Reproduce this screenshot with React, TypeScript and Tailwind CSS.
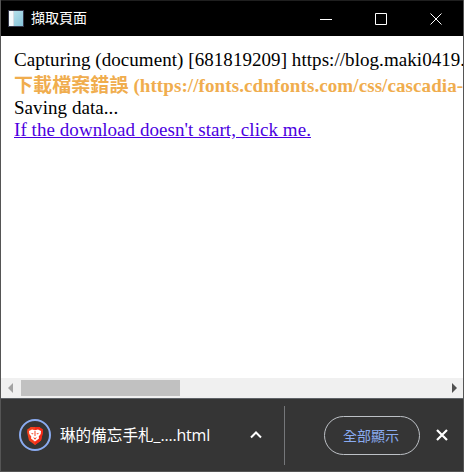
const serif = "font-['Liberation_Serif','Noto_Sans_CJK_TC',serif]";
const sans = "font-['Noto_Sans_CJK_TC',sans-serif]";

function TitleBar() {
  return (
    <header className={`flex h-9 shrink-0 items-center border-t border-[#1f1f1f] bg-black pl-[6px] text-white ${sans}`}>
      <svg width="18" height="18" viewBox="0 0 18 18" className="shrink-0">
        <defs>
          <linearGradient id="book" x1="0" y1="0" x2="1" y2="1">
            <stop offset="0" stopColor="#bfe6ee" />
            <stop offset="1" stopColor="#85c3d9" />
          </linearGradient>
        </defs>
        <rect x="1" y="0" width="16" height="17" fill="#34374a" />
        <rect x="2" y="1" width="14" height="15" fill="url(#book)" />
        <rect x="2" y="1" width="4" height="15" fill="#f4fafc" />
        <rect x="6" y="1" width="1" height="15" fill="#d8dde5" />
      </svg>
      <h1 className="mb-[3px] ml-[6px] text-[14px] leading-5">擷取頁面</h1>
      <svg width="123" height="14" viewBox="0 0 123 14" className="mr-[20px] ml-auto" fill="none" stroke="white">
        <path d="M0 7.5h12M55.5 1.5h11v11h-11zM110.5 1.5l11 11M121.5 1.5l-11 11" />
      </svg>
    </header>
  );
}

function Log() {
  return (
    <main className={`h-[342px] shrink-0 overflow-hidden bg-white pt-[13px] pl-[13px] text-[19px] leading-[22px] tracking-[0.057px] whitespace-nowrap text-black ${serif}`}>
      <div>Capturing (document) [681819209] https://blog.maki0419.</div>
      <div className="h-[26px] font-bold leading-[30px] tracking-[0.09px] text-[#f0ad4e]">下載檔案錯誤 (https://fonts.cdnfonts.com/css/cascadia-</div>
      <div>Saving data...</div>
      <a href="#" className="block w-fit text-[#4b00df] underline">If the download doesn't start, click me.</a>
    </main>
  );
}

function ScrollBar() {
  return (
    <div className="flex h-5 shrink-0 items-center bg-[#f0f0f0]">
      <svg width="20" height="20" viewBox="0 0 20 20"><path d="M12 5v10L7 10z" fill="#a3a3a3" /></svg>
      <div className="h-4 w-[159px] bg-[#c1c1c1]" />
      <svg width="20" height="20" viewBox="0 0 20 20" className="ml-auto"><path d="M9 5v10l5-5z" fill="#505050" /></svg>
    </div>
  );
}

function Downloads() {
  return (
    <footer className={`flex h-[74px] shrink-0 items-center border-y border-t-[#5f6368] border-b-[#555] bg-[#353535] pl-[18px] ${sans}`}>
      <svg width="32" height="34" viewBox="0 0 32 34" className="shrink-0">
        <circle cx="16" cy="17" r="15" fill="none" stroke="#8aabf0" strokeWidth="2" />
        <path d="M11.5 9h9l1.5 1.5 1.5.5.5 3-2 8.5L16 27l-6-4.5L8 14l.5-3 1.5-.5z" fill="#f5411f" />
        <path d="M16 9h4.5l1.5 1.5 1.5.5.5 3-2 8.5L16 27z" fill="#f42a18" />
        <path d="m10 13 3-1.5 3 .7 3-.7 3 1.5-.3 3-2 2.5.3 2L16 23.5l-4-3 .3-2-2-2.5z" fill="#fff" />
        <path d="m11.5 14.8 3 .7-.6 1zM20.5 14.8l-3 .7.6 1zM14 19.3l2 .8 2-.8-2 2.5zM15.5 13h1v5h-1z" fill="#f5411f" />
      </svg>
      <span className="mb-[2px] ml-[9px] w-[150px] shrink-0 text-[15.6px] leading-6 whitespace-nowrap text-white">
        琳的備忘手札<span className="font-['Open_Sans',sans-serif] text-[16px] tracking-[-0.2px]">_....html</span>
      </span>
      <svg width="12" height="8" viewBox="0 0 12 8" className="ml-[40px] shrink-0" fill="none" stroke="#fff" strokeWidth="2">
        <path d="M1 6.5 6 1.5l5 5" />
      </svg>
      <div className="ml-auto h-[59px] w-px bg-[#75777a]" />
      <button className="mr-[16px] ml-[39px] h-[39px] w-[96px] shrink-0 rounded-full border border-[#bdc1c6] pr-[2px] text-[14px] text-[#8aabf0]">全部顯示</button>
      <svg width="12" height="12" viewBox="0 0 12 12" className="mr-[15px] shrink-0" stroke="#fff" strokeWidth="2.2">
        <path d="m1 1 10 10M11 1 1 11" />
      </svg>
    </footer>
  );
}

export default function App() {
  return (
    <div className="flex h-[472px] w-[464px] flex-col overflow-hidden border-x border-[#555]">
      <TitleBar />
      <Log />
      <ScrollBar />
      <Downloads />
    </div>
  );
}
